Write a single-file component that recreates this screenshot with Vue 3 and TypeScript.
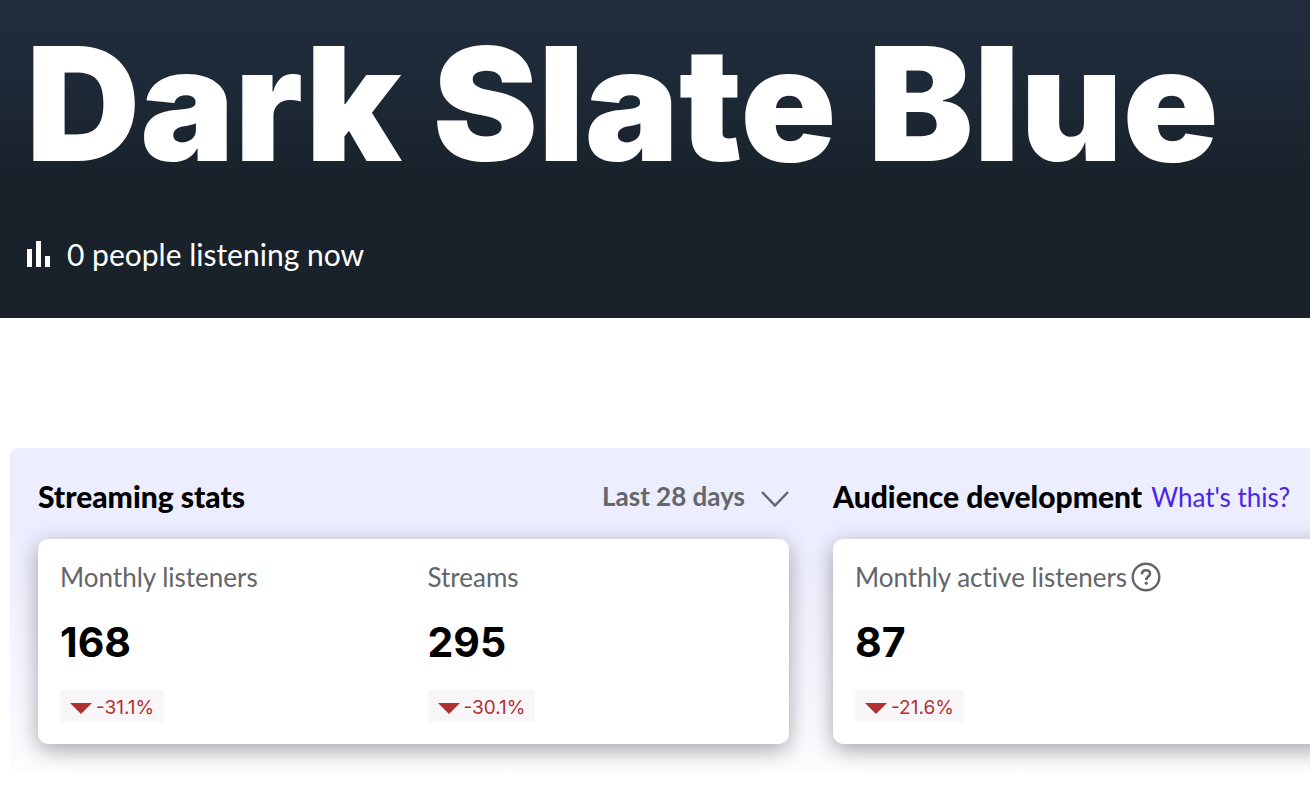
<script setup lang="ts">
import { ref } from 'vue'

interface Stat {
  label: string
  value: number
  change: string
  help?: boolean
}

const artist = 'Dark Slate Blue'
const listeningNow = ref(0)
const range = ref('28')

const streaming: Stat[] = [
  { label: 'Monthly listeners', value: 168, change: '-31.1%' },
  { label: 'Streams', value: 295, change: '-30.1%' },
]
const audience: Stat[] = [
  { label: 'Monthly active listeners', value: 87, change: '-21.6%', help: true },
]
</script>

<template>
  <div class="page">
    <header class="hero">
      <h1 class="artist">{{ artist }}</h1>
      <p class="live">
        <svg class="bars" width="24" height="28" viewBox="0 0 24 28" aria-hidden="true">
          <path d="M1 9h5v18H1zM10 1h5v26h-5zM19 16h5v11h-5z" fill="#fff" />
        </svg>
        <span>{{ listeningNow }} people listening now</span>
      </p>
    </header>

    <main class="panel">
      <section class="group">
        <div class="group-head">
          <h2 class="title">Streaming stats</h2>
          <div class="range">
            <select v-model="range" class="range-select" aria-label="Time range">
              <option value="28">Last 28 days</option>
            </select>
            <svg class="chevron" width="28" height="16" viewBox="0 0 28 16" aria-hidden="true">
              <path d="M1 1l13 13.500L27 1" fill="none" stroke="#636769" stroke-width="2.500" />
            </svg>
          </div>
        </div>
        <div class="card two">
          <div v-for="s in streaming" :key="s.label" class="stat">
            <div class="label">{{ s.label }}</div>
            <div class="value">{{ s.value }}</div>
            <div class="change">
              <svg width="22" height="12" viewBox="0 0 22 12" aria-hidden="true">
                <path d="M0 1h22L11 12z" fill="#b03131" />
              </svg>
              <span>{{ s.change }}</span>
            </div>
          </div>
        </div>
      </section>

      <section class="group">
        <div class="group-head start">
          <h2 class="title">Audience development</h2>
          <a class="link" href="#">What's this?</a>
        </div>
        <div class="card open">
          <div v-for="s in audience" :key="s.label" class="stat">
            <div class="label">
              {{ s.label }}
              <button v-if="s.help" class="help" type="button" aria-label="About monthly active listeners">
                <svg width="30" height="30" viewBox="0 0 30 30" aria-hidden="true">
                  <circle cx="15" cy="15" r="13.300" fill="none" stroke="#636569" stroke-width="2.400" />
                  <path d="M11 12.200c0-2.600 1.700-4 4-4s4 1.400 4 3.500c0 3-3.800 2.900-3.800 6.300" fill="none" stroke="#636569" stroke-width="2.600" />
                  <circle cx="15.200" cy="21.200" r="1.600" fill="#636569" />
                </svg>
              </button>
            </div>
            <div class="value">{{ s.value }}</div>
            <div class="change">
              <svg width="22" height="12" viewBox="0 0 22 12" aria-hidden="true">
                <path d="M0 1h22L11 12z" fill="#b03131" />
              </svg>
              <span>{{ s.change }}</span>
            </div>
          </div>
        </div>
      </section>
    </main>
  </div>
</template>

<style>
body {
  margin: 0;
  background: #fff;
}
</style>

<style scoped>
.page {
  font-family: Lato, "Open Sans", sans-serif;
  font-variant-ligatures: none;
  color: #000;
  overflow: hidden;
}

.hero {
  padding: 0 26px 44px;
  background: linear-gradient(#212d3e 0, #1d2936 90px, #19222b 180px);
  color: #fff;
}

.artist {
  margin: 0;
  padding-bottom: 26px;
  font: 900 158px/208px Inter, "Liberation Sans", sans-serif;
}

.live {
  display: flex;
  align-items: center;
  gap: 17px;
  margin: 0;
  font-size: 30px;
  line-height: 40px;
}

.panel {
  display: grid;
  grid-template-columns: minmax(0, 751fr) minmax(0, 477fr);
  gap: 44px;
  margin: 130px 0 0 10px;
  padding: 28px 0 28px 28px;
  border-radius: 8px 0 0 8px;
  background: linear-gradient(#ecedfe 0, #ecedfe 25%, #fdfcfe 100%);
}

.group-head {
  display: flex;
  align-items: center;
  justify-content: space-between;
  height: 40px;
  margin-bottom: 23px;
  white-space: nowrap;
}

.group-head.start {
  justify-content: flex-start;
  gap: 9px;
}

.title {
  margin: 0;
  font-size: 30px;
  font-weight: 900;
  line-height: 40px;
}

.range {
  position: relative;
}

.range-select {
  appearance: none;
  margin: 0;
  padding: 0 43px 0 0;
  border: 0;
  background: transparent;
  color: #636769;
  font: 700 26px/40px Lato, sans-serif;
}

.chevron {
  position: absolute;
  right: 0;
  top: 15px;
  pointer-events: none;
}

.link {
  color: #4b23ea;
  font-size: 26px;
  line-height: 40px;
  padding-top: 2px;
  text-decoration: none;
}

.card {
  display: grid;
  gap: 28px;
  padding: 22px;
  border-radius: 10px;
  background: #fff;
  box-shadow: 0 6px 22px rgba(0, 0, 0, 0.34);
}

.card.two {
  grid-template-columns: 1fr 1fr;
}

.card.open {
  margin-right: -40px;
}

.label {
  display: flex;
  align-items: center;
  gap: 4px;
  height: 32px;
  color: #636569;
  font-size: 26px;
  white-space: nowrap;
}

.value {
  margin: 24px 0 22px;
  font: 700 41px/51px Inter, sans-serif;
}

.help {
  display: flex;
  padding: 0;
  border: 0;
  background: none;
}

.change {
  display: inline-flex;
  align-items: center;
  gap: 4px;
  height: 28px;
  padding: 4px 10px 0;
  border-radius: 3px;
  background: #f8f6f9;
  color: #b03131;
  font: 400 19px/28px Inter, sans-serif;
  vertical-align: top;
}
</style>
